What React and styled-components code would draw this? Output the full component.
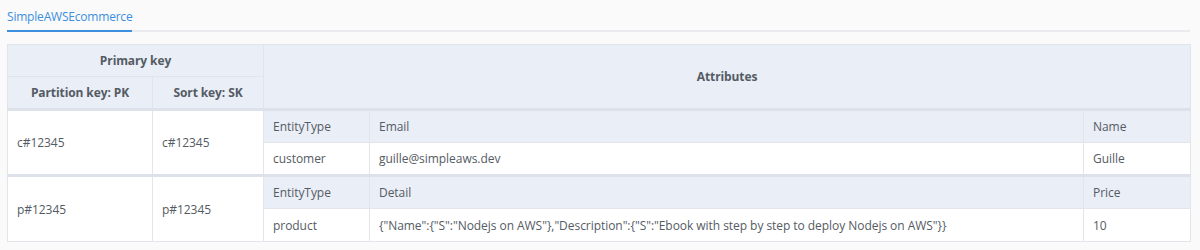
import React from "react";
import styled, { createGlobalStyle } from "styled-components";

const Global = createGlobalStyle`
  html, body { margin: 0; padding: 0; background: #fafafa; }
  body { font-family: "Open Sans", "Noto Sans", sans-serif; }
`;

const Page = styled.div`
  width: 1200px;
  height: 250px;
  padding: 0 10px 0 7px;
  box-sizing: border-box;
`;

const Tabs = styled.div`
  display: flex;
  border-bottom: 2px solid #e9ebee;
  height: 32px;
  box-sizing: border-box;
  margin-bottom: 12px;
`;

const Tab = styled.div`
  font-size: 12px;
  color: ${(p) => (p.$active ? "#3b8fde" : "#545b64")};
  padding-top: 8px;
  border-bottom: 2px solid ${(p) => (p.$active ? "#3b8fde" : "transparent")};
  margin-bottom: -2px;
  letter-spacing: -0.2px;
`;

const Table = styled.table`
  border-collapse: collapse;
  width: 1183px;
  table-layout: fixed;
  font-size: 12px;
  color: #545b64;
  border: 1px solid #e1e4ea;
`;

const Th = styled.th`
  background: #eaeef6;
  border: 1px solid #e0e4ec;
  font-weight: 700;
  height: 31px;
  padding: 0 8px;
  text-align: center;
  color: #545b64;
  letter-spacing: -0.1px;
  border-bottom-width: ${(p) => (p.$last ? "3px" : "1px")};
  border-bottom-color: ${(p) => (p.$last ? "#dde2ea" : "#e0e4ec")};
`;

const Td = styled.td`
  border: 1px solid #e2e5ea;
  background: ${(p) => (p.$head ? "#eaeef6" : "#fff")};
  padding: 0 9px;
  height: 33px;
  box-sizing: border-box;
  text-align: left;
  white-space: nowrap;
  letter-spacing: -0.05px;
  color: #545b64;
`;

const Body = styled.tbody`
  border-top: 3px solid #dde2ea;
`;

const items = [
  {
    pk: "c#12345",
    sk: "c#12345",
    heads: ["EntityType", "Email", "Name"],
    vals: ["customer", "guille@simpleaws.dev", "Guille"],
  },
  {
    pk: "p#12345",
    sk: "p#12345",
    heads: ["EntityType", "Detail", "Price"],
    vals: [
      "product",
      '{"Name":{"S":"Nodejs on AWS"},"Description":{"S":"Ebook with step by step to deploy Nodejs on AWS"}}',
      "10",
    ],
  },
];

export default function App() {
  return (
    <>
      <Global />
      <Page>
        <Tabs>
          <Tab $active>SimpleAWSEcommerce</Tab>
        </Tabs>
        <Table>
          <colgroup>
            <col style={{ width: 145 }} />
            <col style={{ width: 111 }} />
            <col style={{ width: 106 }} />
            <col style={{ width: 714 }} />
            <col style={{ width: 107 }} />
          </colgroup>
          <thead>
            <tr>
              <Th colSpan={2}>Primary key</Th>
              <Th colSpan={3} rowSpan={2} $last>
                Attributes
              </Th>
            </tr>
            <tr>
              <Th $last>Partition key: PK</Th>
              <Th $last>Sort key: SK</Th>
            </tr>
          </thead>
          {items.map((it, i) => (
            <Body key={i}>
              <tr>
                <Td rowSpan={2}>{it.pk}</Td>
                <Td rowSpan={2}>{it.sk}</Td>
                {it.heads.map((h) => (
                  <Td key={h} $head>
                    {h}
                  </Td>
                ))}
              </tr>
              <tr>
                {it.vals.map((v, j) => (
                  <Td key={j}>{v}</Td>
                ))}
              </tr>
            </Body>
          ))}
        </Table>
      </Page>
    </>
  );
}
